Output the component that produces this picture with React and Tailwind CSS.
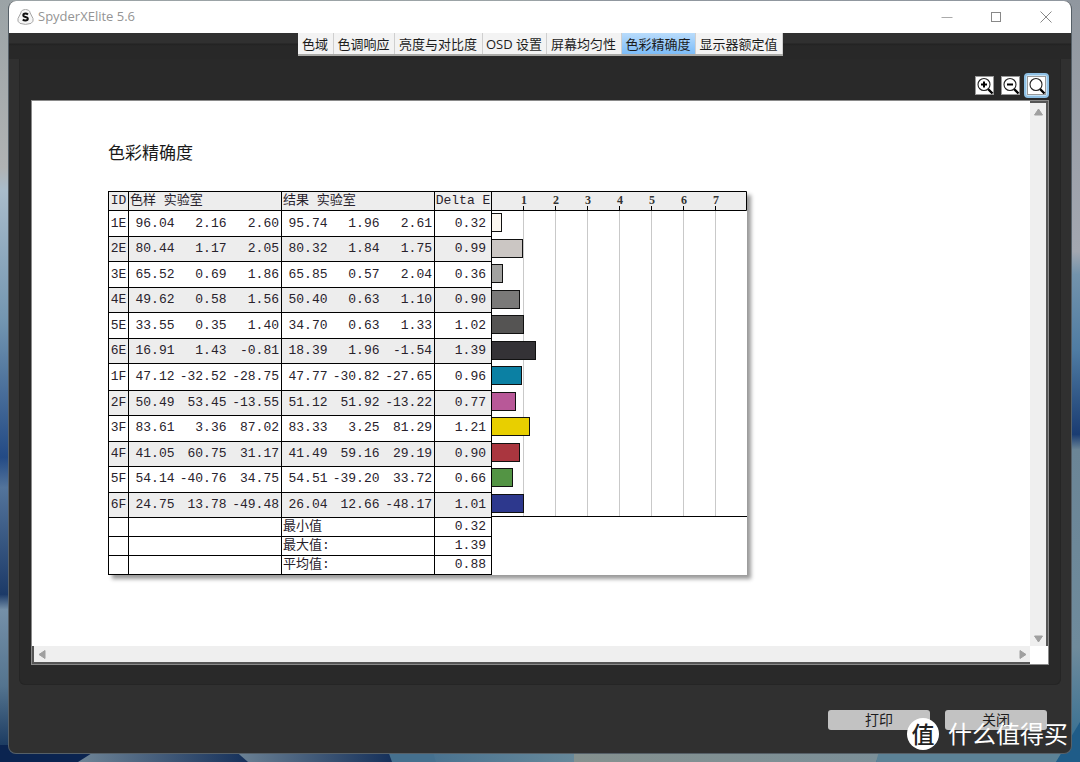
import { useState } from 'react';

const TABS = [
  { label: '色域', width: 'w-9' },
  { label: '色调响应', width: 'w-[61px]' },
  { label: '亮度与对比度', width: 'w-[88px]' },
  { label: 'OSD 设置', width: 'w-16' },
  { label: '屏幕均匀性', width: 'w-[75px]' },
  { label: '色彩精确度', width: 'w-[74px]' },
  { label: '显示器额定值', width: 'w-[87px]' },
];

const SAMPLES = [
  { id: '1E', sample: ['96.04', '2.16', '2.60'], result: ['95.74', '1.96', '2.61'], delta: 0.32, color: '#fbf7f0' },
  { id: '2E', sample: ['80.44', '1.17', '2.05'], result: ['80.32', '1.84', '1.75'], delta: 0.99, color: '#cbc6c3' },
  { id: '3E', sample: ['65.52', '0.69', '1.86'], result: ['65.85', '0.57', '2.04'], delta: 0.36, color: '#a2a2a0' },
  { id: '4E', sample: ['49.62', '0.58', '1.56'], result: ['50.40', '0.63', '1.10'], delta: 0.9, color: '#7a7978' },
  { id: '5E', sample: ['33.55', '0.35', '1.40'], result: ['34.70', '0.63', '1.33'], delta: 1.02, color: '#555453' },
  { id: '6E', sample: ['16.91', '1.43', '-0.81'], result: ['18.39', '1.96', '-1.54'], delta: 1.39, color: '#343236' },
  { id: '1F', sample: ['47.12', '-32.52', '-28.75'], result: ['47.77', '-30.82', '-27.65'], delta: 0.96, color: '#0b80a3' },
  { id: '2F', sample: ['50.49', '53.45', '-13.55'], result: ['51.12', '51.92', '-13.22'], delta: 0.77, color: '#b85898' },
  { id: '3F', sample: ['83.61', '3.36', '87.02'], result: ['83.33', '3.25', '81.29'], delta: 1.21, color: '#e8cf00' },
  { id: '4F', sample: ['41.05', '60.75', '31.17'], result: ['41.49', '59.16', '29.19'], delta: 0.9, color: '#aa363f' },
  { id: '5F', sample: ['54.14', '-40.76', '34.75'], result: ['54.51', '-39.20', '33.72'], delta: 0.66, color: '#539444' },
  { id: '6F', sample: ['24.75', '13.78', '-49.48'], result: ['26.04', '12.66', '-48.17'], delta: 1.01, color: '#2d388d' },
];

const SUMMARY = [
  { label: '最小值', value: '0.32' },
  { label: '最大值:', value: '1.39' },
  { label: '平均值:', value: '0.88' },
];

const UNIT = 32;

function Wallpaper() {
  return (
    <svg className="absolute inset-0 h-full w-full" viewBox="0 0 1080 762" preserveAspectRatio="none" aria-hidden="true">
      <defs>
        <linearGradient id="left" x1="0" y1="0" x2="0" y2="1">
          <stop offset="0" stopColor="#9ba3a6" />
          <stop offset="0.22" stopColor="#b0b3b4" />
          <stop offset="0.25" stopColor="#a9bccb" />
          <stop offset="0.42" stopColor="#7396b1" />
          <stop offset="0.6" stopColor="#234a85" />
          <stop offset="0.64" stopColor="#53749b" />
          <stop offset="0.78" stopColor="#1c3a68" />
          <stop offset="0.8" stopColor="#7590a8" />
          <stop offset="0.9" stopColor="#54748f" />
          <stop offset="1" stopColor="#0d2c55" />
        </linearGradient>
        <linearGradient id="right" x1="0" y1="0" x2="0" y2="1">
          <stop offset="0" stopColor="#90979f" />
          <stop offset="0.33" stopColor="#a3a7b0" />
          <stop offset="0.36" stopColor="#7393ac" />
          <stop offset="0.46" stopColor="#4f7ca3" />
          <stop offset="0.57" stopColor="#1a3c72" />
          <stop offset="0.59" stopColor="#6b8596" />
          <stop offset="0.85" stopColor="#6f8b9c" />
          <stop offset="1" stopColor="#2c6a90" />
        </linearGradient>
        <linearGradient id="petal">
          <stop offset="0" stopColor="#6f8597" />
          <stop offset="1" stopColor="#15305a" />
        </linearGradient>
        <linearGradient id="petal2">
          <stop offset="0" stopColor="#4a7390" />
          <stop offset="1" stopColor="#66889a" />
        </linearGradient>
        <linearGradient id="petal3">
          <stop offset="0" stopColor="#85918f" />
          <stop offset="1" stopColor="#7b8f98" />
        </linearGradient>
      </defs>
      <rect width="540" height="762" fill="url(#left)" />
      <rect x="540" width="540" height="762" fill="url(#right)" />
      <rect y="745" width="110" height="17" fill="#0b2450" />
      <path d="M78 762L100 748H240L248 762Z" fill="url(#petal)" />
      <path d="M248 762L232 748H392V762Z" fill="url(#petal)" />
      <path d="M392 762L387 748H440V762Z" fill="#45708e" />
      <path d="M436 762L432 748H575V762Z" fill="url(#petal2)" />
      <path d="M574 748H882L876 762H574Z" fill="url(#petal3)" />
      <path d="M876 762L880 748H1065L1056 762Z" fill="#5c8296" />
      <path d="M1056 762L1080 722V762Z" fill="#1f5c88" />
    </svg>
  );
}

function TitleBar() {
  return (
    <header className="flex h-8 shrink-0 items-center bg-white text-[#949494]">
      <svg className="ml-2 h-4 w-[17px]" viewBox="0 0 17 16" aria-hidden="true">
        <path d="M5.5 1.2Q8.5 -.4 11.5 1.2Q12.8 2 13.2 4L16 9.5Q17 12.5 14 14.4Q8.5 16.4 3 14.4Q0 12.5 1 9.5L3.8 4Q4.2 2 5.5 1.2Z" fill="#f6f6f6" stroke="#a6a6a6" />
        <path d="M11 5.6Q9.8 4.6 8.4 4.6Q6.3 4.6 6.3 6.2Q6.3 7.5 8.5 7.9Q10.8 8.3 10.8 9.8Q10.8 11.5 8.4 11.5Q6.8 11.5 5.8 10.5" fill="none" stroke="#111" strokeWidth="2" />
      </svg>
      <h1 className="ml-1 text-[13px]">SpyderXElite 5.6</h1>
      <div className="ml-auto flex">
        <button aria-label="最小化" className="flex h-8 w-12 items-center justify-center">
          <svg className="h-3 w-3" viewBox="0 0 12 12"><path d="M.5 6.5H11.5" stroke="#aaa" /></svg>
        </button>
        <button aria-label="最大化" className="flex h-8 w-[50px] items-center justify-center">
          <svg className="h-3 w-3" viewBox="0 0 12 12"><rect x="1.5" y="1.5" width="9" height="9" fill="none" stroke="#888" /></svg>
        </button>
        <button aria-label="关闭窗口" className="flex h-8 w-[50px] items-center justify-center">
          <svg className="h-3 w-3" viewBox="0 0 12 12"><path d="M.5 .5L11.5 11.5M11.5 .5L.5 11.5" stroke="#888" /></svg>
        </button>
      </div>
    </header>
  );
}

function ZoomButton({ label, sign, active, onClick }) {
  return (
    <button
      aria-label={label}
      onClick={onClick}
      className={
        active
          ? 'flex size-[25px] items-center justify-center rounded-sm border-2 border-[#8fc0e4] bg-[#c5e2f6]'
          : 'flex size-[25px] items-center justify-center'
      }
    >
      <svg className="size-[19px] shrink-0" viewBox="0 0 19 19">
        <rect x=".5" y=".5" width="18" height="18" fill="#fff" stroke="#999" />
        <path d="M13 13L17.5 17.5" stroke="#000" strokeWidth="2.4" />
        <circle cx="9" cy="8.5" r="6" fill="#fff" stroke="#222" strokeWidth="1.1" />
        {sign && <path d={sign} stroke="#000" strokeWidth="2" />}
      </svg>
    </button>
  );
}

function LabCells({ values }) {
  return values.map((v, i) => (
    <td
      key={i}
      className={i === 2 ? 'border-y border-r border-black pr-[2px] text-right' : 'border-y border-black pr-px text-right'}
    >
      {v}
    </td>
  ));
}

function SampleTable() {
  return (
    <table className="w-[384px] shrink-0 table-fixed border-collapse border border-black font-['Liberation_Mono','Noto_Sans_CJK_SC',monospace] text-[13px] leading-4 text-[#28222c]">
      <colgroup>
        <col className="w-[20px]" />
        <col className="w-[47px]" />
        <col className="w-[52px]" />
        <col className="w-[54px]" />
        <col className="w-[47px]" />
        <col className="w-[52px]" />
        <col className="w-[54px]" />
        <col className="w-[57px]" />
      </colgroup>
      <thead>
        <tr className="h-[19px] bg-[#ededed] text-left">
          <th className="border border-black text-center font-normal">ID</th>
          <th colSpan={3} className="border border-black pl-px font-normal">色样 实验室</th>
          <th colSpan={3} className="border border-black pl-px font-normal">结果 实验室</th>
          <th className="border border-black text-center font-normal whitespace-nowrap">Delta E</th>
        </tr>
      </thead>
      <tbody>
        {SAMPLES.map(s => (
          <tr key={s.id} className="odd:h-[26px] even:h-[25px] even:bg-[#ededed]">
            <td className="border border-black text-center">{s.id}</td>
            <LabCells values={s.sample} />
            <LabCells values={s.result} />
            <td className="border border-black pr-[5px] text-right">{s.delta.toFixed(2)}</td>
          </tr>
        ))}
      </tbody>
      <tfoot>
        {SUMMARY.map(s => (
          <tr key={s.label} className="h-[19px]">
            <td className="border border-black" />
            <td colSpan={3} className="border border-black" />
            <td colSpan={3} className="border border-black pl-px">{s.label}</td>
            <td className="border border-black pr-[5px] text-right">{s.value}</td>
          </tr>
        ))}
      </tfoot>
    </table>
  );
}

function DeltaChart() {
  const ticks = [1, 2, 3, 4, 5, 6, 7];
  return (
    <svg className="h-[384px] w-[255px] shrink-0" viewBox="0 0 255 384" role="img" aria-label="Delta E">
      <path d="M0 .5H254.5V19.5H0" fill="#ededed" stroke="#000" />
      {ticks.map(t => (
        <g key={t}>
          <path d={`M${t * UNIT - 0.5} 20V326`} stroke="#c9c9c9" />
          <path d={`M${t * UNIT - 0.5} 15V19`} stroke="#000" />
          <text x={t * UNIT} y="13" textAnchor="middle" className="fill-[#333] font-['Liberation_Serif',serif] text-[12px] font-bold">{t}</text>
        </g>
      ))}
      {SAMPLES.map((s, i) => (
        <rect
          key={s.id}
          x="-.5"
          y={Math.round(i * 25.5) + 22.5}
          width={Math.floor(s.delta * UNIT)}
          height="18"
          fill={s.color}
          stroke="#111"
        />
      ))}
      <path d="M0 325.5H255" stroke="#000" />
    </svg>
  );
}

function Arrow({ d, label }) {
  return (
    <button aria-label={label} className="flex size-4 items-center justify-center">
      <svg className="size-[9px]" viewBox="0 0 9 9"><path d={d} fill="#a0a0a0" stroke="#a0a0a0" strokeLinejoin="round" /></svg>
    </button>
  );
}

export default function App() {
  const [tab, setTab] = useState('色彩精确度');
  const [zoom, setZoom] = useState('fit');

  return (
    <div className="relative flex min-h-screen flex-col overflow-hidden px-2 pt-px pb-2 font-['Open_Sans','Noto_Sans_CJK_SC',sans-serif]">
      <Wallpaper />
      <div className="relative flex flex-1 flex-col overflow-hidden rounded-lg border border-t-0 border-[#566068] bg-[#303030]">
        <TitleBar />

        <nav className="flex h-[26px] shrink-0 items-start justify-center bg-[linear-gradient(#303030_10px,#222_11px,#282828_13px)]">
          <div className="flex h-[23px] border-b-2 border-[#a9a9a6] bg-[#f1f1f1]">
            {TABS.map(t => (
              <button
                key={t.label}
                onClick={() => setTab(t.label)}
                className={`${t.width} border-r border-[#cfcfcf] text-center text-[13px] leading-5 whitespace-nowrap text-[#1c1c1c] ${
                  tab === t.label ? 'bg-linear-to-b from-[#b9dcfb] to-[#7cbcf8]' : 'bg-[#f3f3f3]'
                }`}
              >
                {t.label}
              </button>
            ))}
          </div>
        </nav>

        <main className="mx-[10px] flex flex-1 flex-col rounded-b-md border border-t-0 border-[#252525] bg-[#292929] px-[11px] pt-[14px] pb-[19px]">
          <div className="flex justify-end gap-px pb-[2px]">
            <ZoomButton label="放大" sign="M6 8.5H12M9 5.5V11.5" active={zoom === 'in'} onClick={() => setZoom('in')} />
            <ZoomButton label="缩小" sign="M6 8.5H12" active={zoom === 'out'} onClick={() => setZoom('out')} />
            <ZoomButton label="适合" active={zoom === 'fit'} onClick={() => setZoom('fit')} />
          </div>

          <div className="flex flex-1 flex-col border border-[#8a8a8a] bg-white">
            <div className="flex flex-1">
              <section className="flex-1 pt-10 pl-[76px]">
                <h2 className="text-[17px] leading-6 text-[#1a1a1a]">色彩精确度</h2>
                <div className="mt-[26px] flex w-fit bg-white shadow-[4px_4px_4px_rgba(0,0,0,0.4)]">
                  <SampleTable />
                  <DeltaChart />
                </div>
              </section>
              <div className="flex w-[18px] flex-col items-center justify-between border-t-2 border-r-2 border-[#555] bg-[#efefef] pt-px">
                <Arrow label="向上" d="M4.500 1L8.500 7H.5Z" />
                <Arrow label="向下" d="M4.500 8L.5 2H8.500Z" />
              </div>
            </div>
            <div className="flex h-[18px] shrink-0">
              <div className="flex flex-1 items-center justify-between border-b-2 border-l-2 border-[#555] bg-[#efefef]">
                <Arrow label="向左" d="M1 4.500L7 .5V8.500Z" />
                <Arrow label="向右" d="M8 4.500L2 .5V8.500Z" />
              </div>
              <div className="w-[18px] bg-white" />
            </div>
          </div>
        </main>

        <footer className="flex shrink-0 justify-end gap-[15px] pt-[25px] pr-6 pb-[23px] text-sm text-[#1c1c1c]">
          <button className="h-5 w-[102px] rounded-[3px] bg-[#c2c2c2] leading-[18px]">打印</button>
          <button className="h-5 w-[102px] rounded-[3px] bg-[#c2c2c2] leading-[18px]">关闭</button>
        </footer>
      </div>

      <div className="pointer-events-none absolute right-3 bottom-3 flex items-center gap-[9px] text-white">
        <span className="flex size-8 items-center justify-center rounded-full bg-white text-[23px] leading-8 font-medium text-[#222]">值</span>
        <span className="text-[24px] leading-8 font-normal">什么值得买</span>
      </div>
    </div>
  );
}
